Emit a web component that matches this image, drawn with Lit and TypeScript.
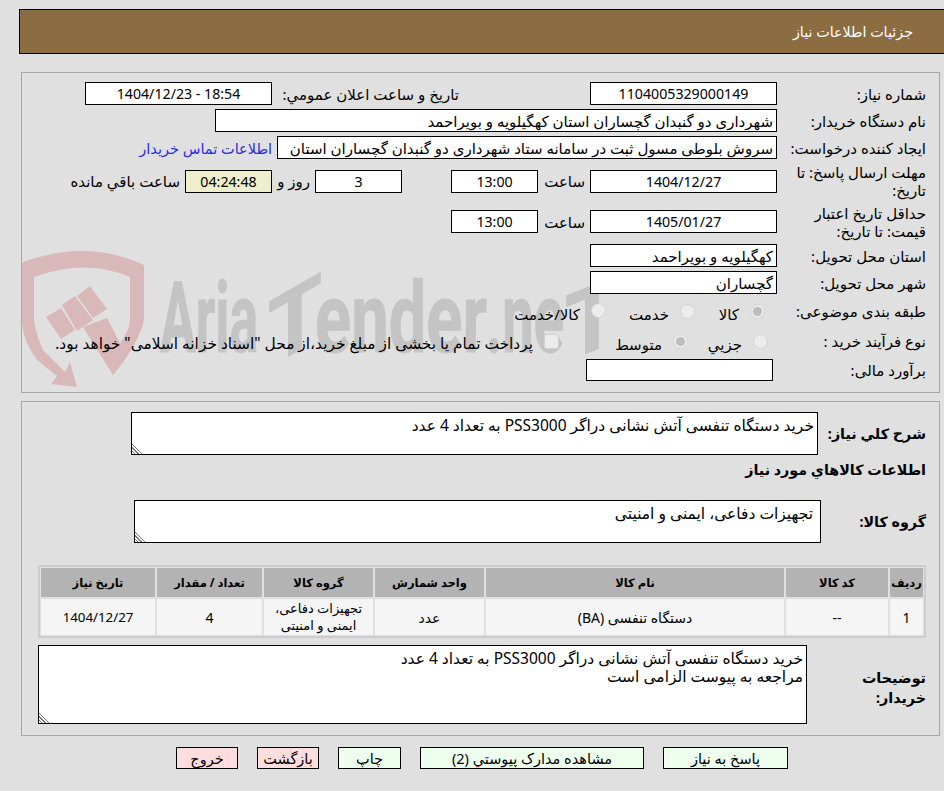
import { LitElement, html, css, svg } from "lit";
import { customElement } from "lit/decorators.js";

const HEAD = ["ردیف", "کد کالا", "نام کالا", "واحد شمارش", "گروه کالا", "تعداد / مقدار", "تاریخ نیاز"];
const ROW = ["1", "--", "دستگاه تنفسی (BA)", "عدد", "تجهیزات دفاعی، ایمنی و امنیتی", "4", "1404/12/27"];

const watermark = svg`
  <path class="wm-red" d="M21 263 Q85 238 144 265 L144 320 Q138 345 113 375 L83 327 L107 318 L120 343 Q130 330 130 320 L130 277 Q85 258 34 277 L34 320 Q36 335 43 350 L65 372 L70 362 L77 387 L51 384 L57 376 L37 360 Q22 340 22 320 Z"/>
  <path class="wm-red" d="M46 317 L61 308 L75 330 L61 339 Z"/>
  <path class="wm-red" d="M62 305 L75 296 L93 320 L77 331 Z"/>
  <path class="wm-red" d="M77 296 L90 286 L107 309 L93 318 Z"/>
  <text class="wm-grey" x="160" y="352" textLength="98" lengthAdjust="spacingAndGlyphs">Aria</text>
  <text class="wm-grey tee" transform="translate(268 368) skewY(-30)" textLength="54" lengthAdjust="spacingAndGlyphs">T</text>
  <text class="wm-grey" x="315" y="352" textLength="172" lengthAdjust="spacingAndGlyphs">ender</text>
  <text class="wm-grey" x="486" y="352" textLength="78" lengthAdjust="spacingAndGlyphs">.ne</text>
  <text class="wm-grey tee" transform="translate(565 362) skewY(-22)" textLength="54" lengthAdjust="spacingAndGlyphs">T</text>
`;

@customElement("app-root")
export class AppRoot extends LitElement {
  static styles = css`
    :host {
      display: block;
      width: 944px;
      height: 791px;
      overflow: hidden;
      background: #e0e0e0;
      color: #000;
      font-family: "Noto Sans", "DejaVu Sans", sans-serif;
      font-size: 15px;
      direction: rtl;
    }
    * { box-sizing: border-box; }
    .page { display: flex; flex-direction: column; padding-top: 9px; }
    .title {
      margin-left: 19px;
      margin-right: -2px;
      height: 45px;
      border: 1px solid #000;
      background: #8c6d42;
      color: #fff;
      display: flex;
      align-items: center;
      padding-right: 32px;
      font-size: 14.3px;
    }
    .panel {
      position: relative;
      margin: 18px 4px 0 21px;
      width: 919px;
      border: 1px solid #a6a6a6;
      padding-right: 13px;
    }
    .wm { position: absolute; left: 0; top: 0; width: 917px; height: 319px; pointer-events: none; direction: ltr; }
    .wm-red { fill: #d9b8ba; }
    .wm-grey { fill: #c4c4c4; stroke: #c4c4c4; stroke-width: 1px; font-family: Roboto, sans-serif; font-weight: 700; font-size: 98px; }
    .tee { font-size: 92px; }
    .info { position: relative; height: 319px; padding-top: 9px; display: flex; flex-direction: column; gap: 4px; }
    .row { display: flex; align-items: center; height: 23px; white-space: nowrap; }
    .tall { height: 36px; }
    .tall2 { height: 37px; }
    .rad1, .rad2 { height: 26px; }
    .label { width: 149px; flex: none; padding-left: 6px; line-height: 18px; white-space: normal; }
    .field {
      height: 23px;
      flex: none;
      border: 1px solid #000;
      background: #fff;
      display: flex;
      align-items: center;
      padding: 0 3px;
      overflow: hidden;
      white-space: nowrap;
    }
    .c { justify-content: center; }
    .num { font-size: 14.2px; }
    .w187 { width: 187px; }
    .w87 { width: 87px; }
    .w562 { width: 562px; }
    .w500 { width: 500px; }
    .timer { background: #eeeecc; }
    .pr131 { padding-right: 131px; width: 318px; flex: none; }
    .ml5 { margin-right: 5px; }
    .hour { width: 47px; margin-right: 5px; flex: none; }
    .days { margin-right: 49px; }
    .and { margin: 0 5px; width: 33px; flex: none; }
    .link { color: #2a2ae6; margin-right: 5px; font-size: 14.5px; }
    .m4 { margin-right: 4px; height: 22px; }
    .radio {
      flex: none;
      width: 15px;
      height: 15px;
      border-radius: 50%;
      background: #ececec;
      border: 1px solid #d2d2d2;
      display: flex;
      align-items: center;
      justify-content: center;
    }
    .radio.on::after { content: ""; width: 9px; height: 9px; border-radius: 50%; background: #bdbdbd; }
    .check { flex: none; width: 15px; height: 15px; border-radius: 3px; background: #ececec; border: 1px solid #d2d2d2; }
    .opts { display: flex; align-items: center; }
    .mr12 { margin-right: 12px; }
    .mr9 { margin-right: 9px; }
    .opt { display: flex; align-items: center; flex: none; gap: 11px; }
    .w70 { width: 70px; }
    .w89 { width: 89px; }
    .w80 { width: 80px; }
    .w129 { width: 129px; }
    .up2 { margin-top: -2px; }
    .txt { padding-top: 5px; }
    .long { font-size: 15.4px; }

    .panel2 { margin-top: 8px; height: 335px; padding-top: 10px; display: flex; flex-direction: column; }
    .b { font-weight: 700; font-size: 14.3px; }
    .trow { display: flex; align-items: center; }
    .lab108 { width: 108px; flex: none; }
    .lab105 { width: 105px; flex: none; }
    .lab119 { width: 119px; flex: none; padding-left: 30px; line-height: 20px; padding-top: 6px; }
    textarea {
      display: block;
      flex: none;
      border: 1px solid #000;
      border-radius: 0;
      outline: none;
      background: #fff;
      font: inherit;
      font-size: 15.5px;
      color: inherit;
      padding: 3px 3px;
      margin: 0;
      line-height: 18px;
      direction: rtl;
    }
    textarea::-webkit-resizer {
      background: linear-gradient(45deg, transparent 1.5px, #777 1.5px 2.5px, transparent 2.5px 4px, #777 4px 5px, transparent 5px 6.5px, #777 6.5px 7.5px, transparent 7.5px);
    }
    .t1 { width: 687px; height: 43px; }
    .t2 { width: 687px; height: 43px; padding-right: 7px; }
    .t3 { width: 769px; height: 79px; }
    .heading { height: 18px; margin-top: 6px; line-height: 18px; }
    .grp { margin-top: 21px; }
    .table {
      margin-top: 22px;
      width: 888px;
      height: 73px;
      border: 2px solid #cdcdcd;
      padding: 1px;
      display: grid;
      grid-template-columns: 33px 102px 298px 109px 109px 105px 114px;
      grid-template-rows: 29px 36px;
      gap: 2px;
    }
    .th {
      background: #b3b3b3;
      font-weight: 700;
      font-size: 11.5px;
      display: flex;
      align-items: center;
      justify-content: center;
      white-space: nowrap;
    }
    .td {
      background: #f5f5f5;
      display: flex;
      align-items: center;
      justify-content: center;
      text-align: center;
      line-height: 17px;
      padding: 0 4px;
      font-size: 14px;
    }
    .td.sm { font-size: 13px; }
    .td.nm { font-size: 13.3px; }
    .notes { margin-top: 7px; }
    .actions { display: flex; gap: 19px; margin: 11px 156px 0 0; }
    .btn {
      height: 22px;
      border: 1px solid #000;
      background: #eeffee;
      display: flex;
      align-items: center;
      justify-content: center;
      font-size: 14.5px;
      font-family: inherit;
      color: inherit;
      padding: 0;
      white-space: nowrap;
    }
    .btn.red { background: #ffdddd; }
    .b125 { width: 125px; }
    .b225 { width: 224px; }
    .b63 { width: 63px; }
    .b62 { width: 62px; }
  `;

  render() {
    return html`
      <div class="page">
        <div class="title">جزئیات اطلاعات نیاز</div>

        <section class="panel">
          <svg class="wm" viewBox="22 73 917 319" aria-hidden="true">${watermark}</svg>
          <div class="info">
            <div class="row">
              <div class="label">شماره نیاز:</div>
              <div class="field w187 c num">1104005329000149</div>
              <div class="pr131">تاریخ و ساعت اعلان عمومي:</div>
              <div class="field w187 c num"><span dir="ltr">1404/12/23 - 18:54</span></div>
            </div>
            <div class="row">
              <div class="label">نام دستگاه خریدار:</div>
              <div class="field w562">شهرداری دو گنبدان گچساران استان کهگیلویه و بویراحمد</div>
            </div>
            <div class="row">
              <div class="label">ایجاد کننده درخواست:</div>
              <div class="field w500">سروش بلوطی مسول ثبت در سامانه ستاد شهرداری دو گنبدان گچساران استان</div>
              <div class="link">اطلاعات تماس خریدار</div>
            </div>
            <div class="row tall">
              <div class="label">مهلت ارسال پاسخ: تا تاریخ:</div>
              <div class="field w187 c num">1404/12/27</div>
              <div class="hour">ساعت</div>
              <div class="field w87 c num">13:00</div>
              <div class="field w87 c num days">3</div>
              <div class="and">روز و</div>
              <div class="field w87 c num timer">04:24:48</div>
              <div class="ml5">ساعت باقي مانده</div>
            </div>
            <div class="row tall2">
              <div class="label">حداقل تاریخ اعتبار قیمت: تا تاریخ:</div>
              <div class="field w187 c num">1405/01/27</div>
              <div class="hour">ساعت</div>
              <div class="field w87 c num">13:00</div>
            </div>
            <div class="row">
              <div class="label">استان محل تحویل:</div>
              <div class="field w187">کهگیلویه و بویراحمد</div>
            </div>
            <div class="row">
              <div class="label">شهر محل تحویل:</div>
              <div class="field w187">گچساران</div>
            </div>
            <div class="row rad1">
              <div class="label">طبقه بندی موضوعی:</div>
              <div class="opts mr12">
                <div class="opt w70"><span class="radio on"></span><span class="txt">کالا</span></div>
                <div class="opt w89"><span class="radio"></span><span class="txt">خدمت</span></div>
                <div class="opt"><span class="radio up2"></span><span class="txt">کالا/خدمت</span></div>
              </div>
            </div>
            <div class="row rad2">
              <div class="label">نوع فرآیند خرید :</div>
              <div class="opts mr9">
                <div class="opt w80"><span class="radio"></span><span class="txt">جزیي</span></div>
                <div class="opt w129"><span class="radio on"></span><span class="txt">متوسط</span></div>
                <div class="opt"><span class="check"></span><span class="txt long">پرداخت تمام یا بخشی از مبلغ خرید،از محل "اسناد خزانه اسلامی" خواهد بود.</span></div>
              </div>
            </div>
            <div class="row">
              <div class="label">برآورد مالی:</div>
              <div class="field w187 m4"></div>
            </div>
          </div>
        </section>

        <section class="panel panel2">
          <div class="trow">
            <div class="lab108 b">شرح کلي نیاز:</div>
            <textarea class="t1" readonly>خرید دستگاه تنفسی آتش نشانی دراگر PSS3000 به تعداد 4 عدد</textarea>
          </div>
          <div class="heading b">اطلاعات کالاهاي مورد نیاز</div>
          <div class="trow grp">
            <div class="lab105 b">گروه کالا:</div>
            <textarea class="t2" readonly>تجهیزات دفاعی، ایمنی و امنیتی</textarea>
          </div>
          <div class="table">
            ${HEAD.map((h) => html`<div class="th">${h}</div>`)}
            ${ROW.map((c, i) => html`<div class="td ${i === 4 ? "sm" : i === 6 ? "nm" : ""}">${c}</div>`)}
          </div>
          <div class="trow notes">
            <div class="lab119 b">توضیحات خریدار:</div>
            <textarea class="t3" readonly>خرید دستگاه تنفسی آتش نشانی دراگر PSS3000 به تعداد 4 عدد
مراجعه به پیوست الزامی است</textarea>
          </div>
        </section>

        <div class="actions">
          <button class="btn b125">پاسخ به نیاز</button>
          <button class="btn b225">مشاهده مدارک پیوستي (2)</button>
          <button class="btn b63">چاپ</button>
          <button class="btn red b62">بازگشت</button>
          <button class="btn red b62">خروج</button>
        </div>
      </div>
    `;
  }
}
